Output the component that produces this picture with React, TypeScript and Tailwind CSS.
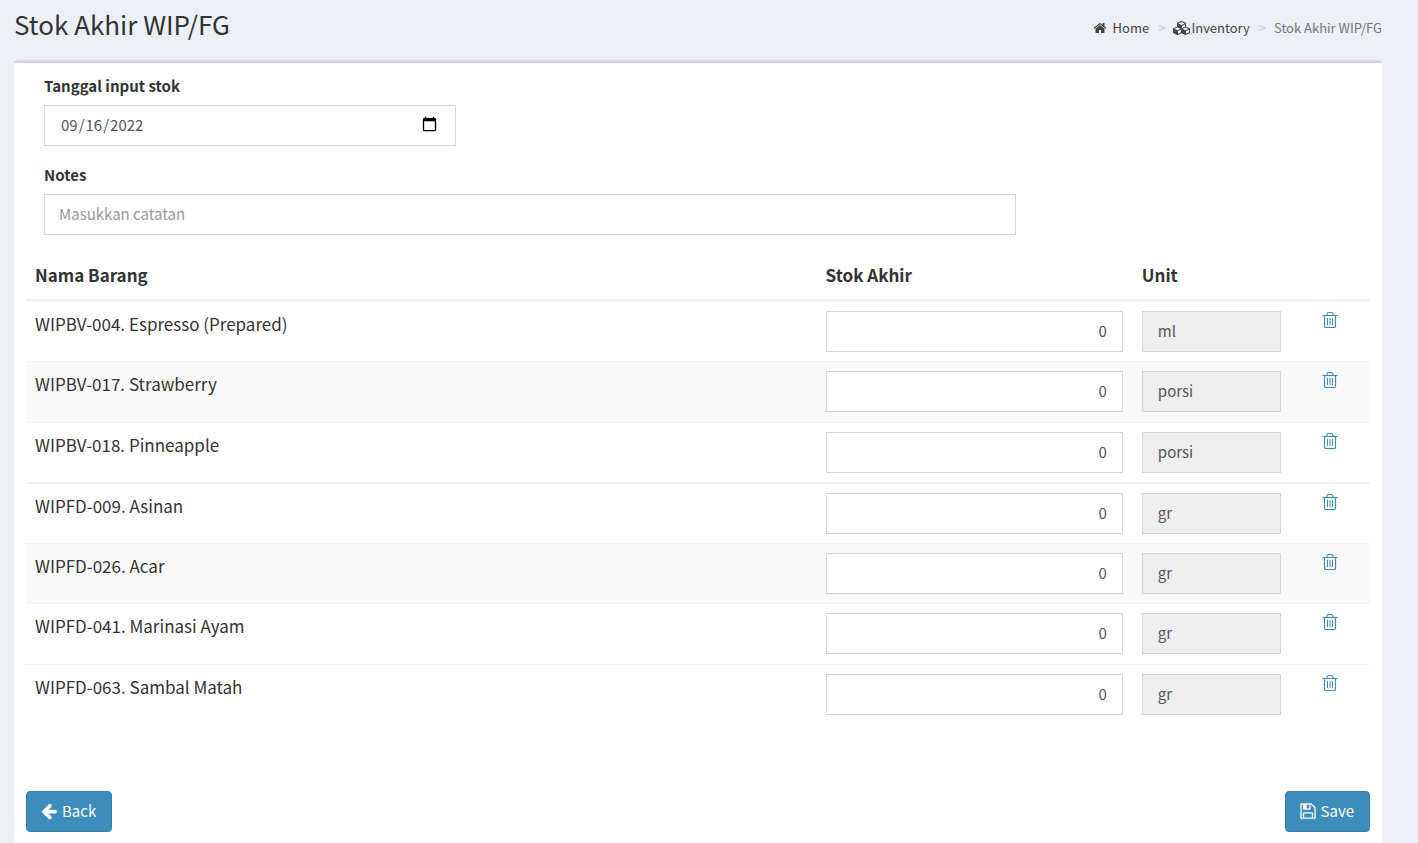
import React, { useState } from 'react';
import clsx from 'clsx';

interface StockItem {
    code: string;
    name: string;
    unit: string;
    qty: string;
}

const initialItems: StockItem[] = [
    { code: 'WIPBV-004', name: 'Espresso (Prepared)', unit: 'ml', qty: '0' },
    { code: 'WIPBV-017', name: 'Strawberry', unit: 'porsi', qty: '0' },
    { code: 'WIPBV-018', name: 'Pinneapple', unit: 'porsi', qty: '0' },
    { code: 'WIPFD-009', name: 'Asinan', unit: 'gr', qty: '0' },
    { code: 'WIPFD-026', name: 'Acar', unit: 'gr', qty: '0' },
    { code: 'WIPFD-041', name: 'Marinasi Ayam', unit: 'gr', qty: '0' },
    { code: 'WIPFD-063', name: 'Sambal Matah', unit: 'gr', qty: '0' },
];

interface IconProps {
    className?: string;
}

const HomeIcon: React.FC<IconProps> = ({ className }) => (
    <svg viewBox="0 0 1792 1792" fill="currentColor" className={className} aria-hidden="true">
        <path d="M1472 992v480q0 26-19 45t-45 19h-384v-384h-256v384h-384q-26 0-45-19t-19-45v-480q0-1 .5-3t.5-3l575-474 575 474q1 2 1 6zm223-69l-62 74q-8 9-21 11h-3q-13 0-21-7l-692-577-692 577q-12 8-24 7-13-2-21-11l-62-74q-8-10-7-23.5t11-21.5l719-599q32-26 76-26t76 26l244 204v-195q0-14 9-23t23-9h192q14 0 23 9t9 23v408l219 182q10 8 11 21.5t-7 23.5z" />
    </svg>
);

const CubesIcon: React.FC<IconProps> = ({ className }) => (
    <svg viewBox="0 0 2304 1792" fill="currentColor" className={className} aria-hidden="true">
        <path d="M640 1632l384-192v-314l-384 164v342zm-64-454l404-173-404-173-404 173zm1088 454l384-192v-314l-384 164v342zm-64-454l404-173-404-173-404 173zm-448-293l384-165v-266l-384 164v267zm-64-379l441-189-441-189-441 189zm1088 518v416q0 36-19 67t-52 47l-448 224q-25 14-57 14t-57-14l-448-224q-4-2-7-4-2 2-7 4l-448 224q-25 14-57 14t-57-14l-448-224q-33-16-52-47t-19-67v-416q0-38 21.5-70t56.5-48l434-186v-400q0-38 21.5-70t56.5-48l448-192q23-10 50-10t50 10l448 192q35 16 56.5 48t21.5 70v400l434 186q36 16 57 48t21 70z" />
    </svg>
);

const ArrowLeftIcon: React.FC<IconProps> = ({ className }) => (
    <svg viewBox="0 0 1792 1792" fill="currentColor" className={className} aria-hidden="true">
        <path d="M1664 896v128q0 53-32.5 90.5t-84.5 37.5h-704l293 294q38 36 38 90t-38 90l-75 76q-37 37-90 37-52 0-91-37l-651-652q-37-37-37-90 0-52 37-91l651-650q38-38 91-38 52 0 90 38l75 74q38 38 38 91t-38 91l-293 293h704q52 0 84.5 37.5t32.5 90.5z" />
    </svg>
);

const SaveIcon: React.FC<IconProps> = ({ className }) => (
    <svg viewBox="0 0 1792 1792" fill="currentColor" className={className} aria-hidden="true">
        <path d="M512 1536h768v-384h-768v384zm896 0h128v-896q0-14-10-38.5t-20-34.5l-281-281q-10-10-34-20t-39-10v416q0 40-28 68t-68 28h-576q-40 0-68-28t-28-68v-416h-128v1280h128v-416q0-40 28-68t68-28h832q40 0 68 28t28 68v416zm-384-928v-320q0-13-9.5-22.5t-22.5-9.5h-192q-13 0-22.5 9.5t-9.5 22.5v320q0 13 9.5 22.5t22.5 9.5h192q13 0 22.5-9.5t9.5-22.5zm640 32v928q0 40-28 68t-68 28h-1344q-40 0-68-28t-28-68v-1344q0-40 28-68t68-28h928q40 0 88 20t76 48l280 280q28 28 48 76t20 88z" />
    </svg>
);

const TrashIcon: React.FC<IconProps> = ({ className }) => (
    <svg viewBox="0 0 16 17" fill="none" stroke="currentColor" className={className} aria-hidden="true">
        <path strokeWidth="1.2" d="M.5 4.500h15M5 4.500V3q0-1.500 1.500-1.500h3Q11 1.500 11 3v1.500M2.500 4.500V15q0 1.500 1 1.500h9q1 0 1-1.500V4.500" />
        <path d="M5.500 7v7M8 7v7M10.500 7v7" />
    </svg>
);

const labelClass = 'mb-2 block text-[15px] leading-[22px] font-bold';
const fieldClass = 'block h-[41px] w-full border border-[#d2d6de] pb-0.5 text-[15px] leading-6 text-[#555]';
const buttonClass = 'flex h-[41px] items-center gap-1 rounded-[4px] border border-[#367fa9] bg-[#3c8dbc] pr-[15px] pb-0.5 pl-[13px] text-[15px] leading-6 text-white hover:bg-[#367fa9]';

const App: React.FC = () => {
    const [date, setDate] = useState('2022-09-16');
    const [notes, setNotes] = useState('');
    const [items, setItems] = useState<StockItem[]>(initialItems);

    const handleQtyChange = (code: string, qty: string) => {
        setItems(items.map(item => (item.code === code ? { ...item, qty } : item)));
    };

    const handleRemove = (code: string) => {
        setItems(items.filter(item => item.code !== code));
    };

    return (
        <div className="flex min-h-screen flex-col bg-[#ecf0f5] pr-9 pl-3.5 font-['Noto_Sans_CJK_SC','Noto_Sans',sans-serif] text-[#333]">
            <header className="flex h-15 items-start justify-between pt-1.5">
                <h1 className="text-[26px] leading-9">Stok Akhir WIP/FG</h1>
                <nav aria-label="Breadcrumb" className="pt-2.5">
                    <ol className="flex items-center text-[13px] leading-6 text-[#444]">
                        <li>
                            <a href="#home" className="flex items-center gap-1.5">
                                <HomeIcon className="size-3.5" />
                                Home
                            </a>
                        </li>
                        <li aria-hidden="true" className="pr-2 pl-[9px] text-[#ccc]">&gt;</li>
                        <li>
                            <a href="#inventory" className="flex items-center">
                                <CubesIcon className="h-3.5 w-[18px]" />
                                Inventory
                            </a>
                        </li>
                        <li aria-hidden="true" className="pr-2 pl-[9px] text-[#ccc]">&gt;</li>
                        <li className="text-[#777]">Stok Akhir WIP/FG</li>
                    </ol>
                </nav>
            </header>

            <main className="flex-1 rounded-t-[4px] border-t-3 border-[#d2d6de] bg-white px-3 pt-3 pb-[11px]">
                <div className="mb-[18px] w-4/12 px-[18px]">
                    <label htmlFor="stock-date" className={labelClass}>Tanggal input stok</label>
                    <input
                        type="date"
                        id="stock-date"
                        value={date}
                        onChange={(e) => setDate(e.target.value)}
                        className={clsx(fieldClass, 'px-[15px] [&::-webkit-calendar-picker-indicator]:size-[17px]')}
                    />
                </div>
                <div className="mb-[18px] w-9/12 px-[18px]">
                    <label htmlFor="stock-notes" className={labelClass}>Notes</label>
                    <input
                        type="text"
                        id="stock-notes"
                        placeholder="Masukkan catatan"
                        value={notes}
                        onChange={(e) => setNotes(e.target.value)}
                        className={clsx(fieldClass, 'px-3.5 placeholder:text-[#999]')}
                    />
                </div>

                <table className="w-full table-fixed border-separate border-spacing-0 text-left text-[17px] leading-[26px]">
                    <thead>
                        <tr className="[&>th]:border-b-3 [&>th]:border-[#f4f4f4] [&>th]:pt-[9px] [&>th]:pr-2.5 [&>th]:pb-[11px] [&>th]:pl-[9px] [&>th]:font-bold">
                            <th scope="col" className="w-10/17">Nama Barang</th>
                            <th scope="col" className="w-4/17">Stok Akhir</th>
                            <th scope="col" className="w-2/17">Unit</th>
                            <th scope="col" className="w-1/17" aria-label="Hapus" />
                        </tr>
                    </thead>
                    <tbody>
                        {items.map((item, index) => (
                            <tr
                                key={item.code}
                                className={clsx(
                                    'h-15 align-top first:h-[59px] even:h-[61px] [&>td]:border-[#f4f4f4] [&>td]:pt-[9px] [&>td]:pr-2.5 [&>td]:pl-[9px]',
                                    index > 0 && (index === 3 ? '[&>td]:border-t-2' : '[&>td]:border-t'),
                                    index % 3 === 1 && 'bg-[#f9f9f9]'
                                )}
                            >
                                <td>{item.code}. {item.name}</td>
                                <td>
                                    <input
                                        type="text"
                                        inputMode="decimal"
                                        aria-label={`Stok akhir ${item.name}`}
                                        value={item.qty}
                                        onChange={(e) => handleQtyChange(item.code, e.target.value)}
                                        className={clsx(fieldClass, 'bg-white px-[15px] text-right')}
                                    />
                                </td>
                                <td>
                                    <input
                                        type="text"
                                        readOnly
                                        aria-label={`Unit ${item.name}`}
                                        value={item.unit}
                                        className={clsx(fieldClass, 'bg-[#eee] px-[15px]')}
                                    />
                                </td>
                                <td>
                                    <button
                                        type="button"
                                        aria-label={`Hapus ${item.name}`}
                                        onClick={() => handleRemove(item.code)}
                                        className="mx-auto block text-[#3c8dbc] hover:text-[#72afd2]"
                                    >
                                        <TrashIcon className="h-[17px] w-4" />
                                    </button>
                                </td>
                            </tr>
                        ))}
                    </tbody>
                </table>

                <div className="mt-[67px] flex justify-between">
                    <button type="button" className={buttonClass}>
                        <ArrowLeftIcon className="size-[18px]" />
                        Back
                    </button>
                    <button type="button" className={buttonClass}>
                        <SaveIcon className="size-[18px]" />
                        Save
                    </button>
                </div>
            </main>
        </div>
    );
};

export default App;
